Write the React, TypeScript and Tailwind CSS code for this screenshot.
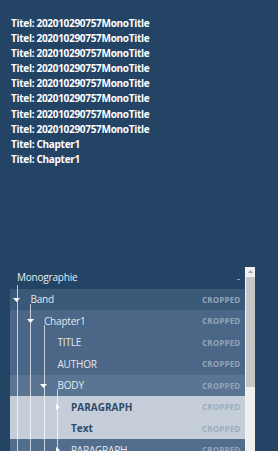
import React from "react";

const titles = [
  ...Array(8).fill("Titel: 202010290757MonoTitle"),
  "Titel: Chapter1",
  "Titel: Chapter1",
];

type Row = {
  label: string;
  pad: string;
  bg: string;
  toggle: "down" | "right" | "none";
  selected?: boolean;
};

const rows: Row[] = [
  { label: "Band", pad: "pl-[0px]", bg: "bg-[#3a5878]", toggle: "down" },
  { label: "Chapter1", pad: "pl-[13.5px]", bg: "bg-[#4b6686]", toggle: "down" },
  { label: "TITLE", pad: "pl-[27px]", bg: "bg-[#4b6686]", toggle: "none" },
  { label: "AUTHOR", pad: "pl-[27px]", bg: "bg-[#4b6686]", toggle: "none" },
  { label: "BODY", pad: "pl-[27px]", bg: "bg-[#5a7493]", toggle: "down" },
  { label: "PARAGRAPH", pad: "pl-[40.5px]", bg: "bg-[#c4cdd8]", toggle: "right", selected: true },
  { label: "Text", pad: "pl-[40.5px]", bg: "bg-[#c4cdd8]", toggle: "none", selected: true },
  { label: "PARAGRAPH", pad: "pl-[40.5px]", bg: "bg-[#536d8c]", toggle: "right" },
];

function Toggle({ kind }: { kind: Row["toggle"] }) {
  return (
    <span className="relative z-20 flex w-[13.5px] shrink-0 items-center justify-center">
      {kind === "down" && (
        <svg width="7" height="4" viewBox="0 0 7 4">
          <path d="M0 0 L7 0 L3.5 4 Z" fill="#ffffff" />
        </svg>
      )}
      {kind === "right" && (
        <svg width="4" height="6" viewBox="0 0 4 6" className="ml-[1px]">
          <path d="M0 0 L4 3 L0 6 Z" fill="#ffffff" />
        </svg>
      )}
    </span>
  );
}

export default function App() {
  return (
    <div
      className="flex h-[451px] w-[278px] flex-col overflow-hidden bg-[#244465]"
      style={{ fontFamily: '"Open Sans", "Noto Sans", sans-serif' }}
    >
      <div className="flex flex-col pl-[11px] pt-[16px]">
        {titles.map((t, i) => (
          <div
            key={i}
            className="h-[15.1px] whitespace-nowrap text-[10px] font-bold leading-[15.1px] tracking-[-0.3px] text-white"
          >
            {t}
          </div>
        ))}
      </div>

      <div className="ml-[10px] mt-[100px] flex w-[245px] flex-1">
        <div className="relative flex w-[235px] flex-col">
          {/* guide lines */}
          <div className="absolute left-[6.5px] top-[18px] bottom-0 z-10 w-px bg-white/70" />
          <div className="absolute left-[20px] top-[37px] bottom-0 z-10 w-px bg-white/70" />
          <div className="absolute left-[33.5px] top-[58px] bottom-0 z-10 w-px bg-white/70" />
          <div className="absolute left-[47px] top-[122px] bottom-0 z-10 w-px bg-white/70" />

          <div className="flex h-[22px] items-center pl-[7px]">
            <span className="text-[10px] tracking-[-0.2px] text-[#e8edf2]">Monographie</span>
            <span className="ml-auto mr-[5px] mt-[3px] h-px w-[3px] bg-[#8c9db2]" />
          </div>

          {rows.map((r, i) => (
            <div key={i} className={`flex h-[21.5px] shrink-0 items-center ${r.bg} ${r.pad}`}>
              <Toggle kind={r.toggle} />
              <span
                className={
                  r.selected
                    ? "ml-[7px] text-[10px] font-bold text-[#2d4a6c]"
                    : "ml-[7px] text-[10px] tracking-[-0.2px] text-[#e3e8ee]"
                }
              >
                {r.label}
              </span>
              <span
                className={
                  r.selected
                    ? "ml-auto pr-[4.5px] text-[8px] font-bold tracking-[0.2px] text-[#9badbf]"
                    : "ml-auto pr-[4.5px] text-[8px] font-bold tracking-[0.2px] text-[#93a4b8]"
                }
              >
                CROPPED
              </span>
            </div>
          ))}
        </div>

        {/* scrollbar */}
        <div className="flex w-[10px] flex-col border-l border-[#f4f4f4] bg-[#efefef]">
          <div className="flex h-[10px] items-center justify-center">
            <svg width="5" height="3" viewBox="0 0 5 3">
              <path d="M0 3 L2.5 0 L5 3 Z" fill="#a3a3a3" />
            </svg>
          </div>
          <div className="h-[110px] w-full bg-[#c6c6c6]" />
          <div className="flex-1" />
        </div>
      </div>
    </div>
  );
}
